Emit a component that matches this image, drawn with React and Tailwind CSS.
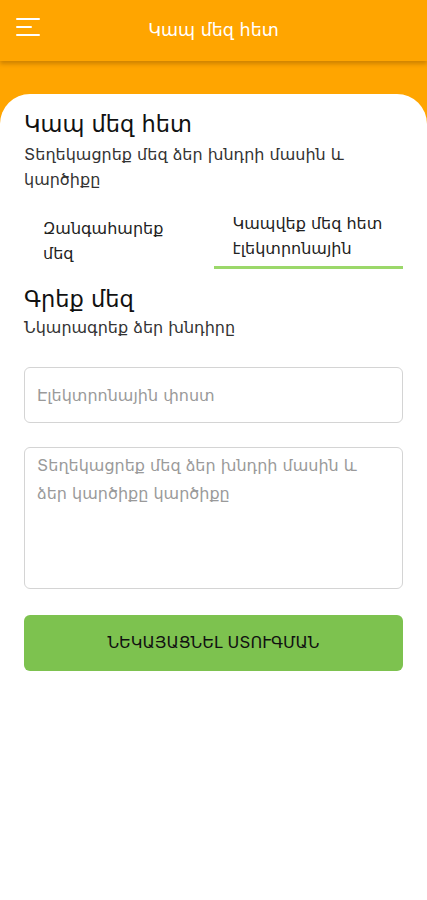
import React from "react";

const font = { fontFamily: '"DejaVu Sans", "Noto Sans", sans-serif' };

export default function App() {
  return (
    <div className="min-h-[900px] w-full bg-white" style={font}>
      {/* top bar */}
      <div className="bg-[#ffa500]">
        <div className="relative flex h-[61px] items-center justify-center shadow-[0_3px_4px_rgba(150,90,0,0.45)]">
          <button className="absolute left-4 top-[18px] flex w-6 flex-col gap-[6px]">
            <span className="block h-[2px] w-6 rounded bg-white" />
            <span className="block h-[2px] w-4 rounded bg-white" />
            <span className="block h-[2px] w-6 rounded bg-white" />
          </button>
          <h1 className="text-[17.5px] text-white">Կապ մեզ հետ</h1>
        </div>
        <div className="h-[34px]" />
      </div>

      {/* card */}
      <div className="-mt-[1px] bg-[#ffa500]">
        <div className="rounded-t-[30px] bg-white px-6 pt-[14px] pb-10">
          <h2 className="text-[22.5px] leading-8 text-[#111]">Կապ մեզ հետ</h2>
          <p className="mt-[2px] text-[16px] leading-[25px] text-[#333]">
            Տեղեկացրեք մեզ ձեր խնդրի մասին և կարծիքը
          </p>

          <div className="mt-[19px] grid grid-cols-2 text-[16px] leading-[25px] text-[#222]">
            <div className="pl-[19px] pr-8 pt-[5px]">Զանգահարեք մեզ</div>
            <div className="border-b-[3px] border-[#9bd86a] pb-[5px] pl-[19px]">
              Կապվեք մեզ հետ էլեկտրոնային
            </div>
          </div>

          <h2 className="mt-[14px] text-[22.5px] leading-8 text-[#111]">Գրեք մեզ</h2>
          <p className="text-[16px] leading-[25px] text-[#333]">Նկարագրեք ձեր խնդիրը</p>

          <input
            className="mt-[27px] block h-[56px] w-full rounded-md border border-[#d4d4d4] px-3 text-[16px] text-[#333] placeholder:text-[#9a9a9a] outline-none"
            placeholder="Էլեկտրոնային փոստ"
          />
          <textarea
            className="mt-6 block h-[142px] w-full resize-none rounded-md border border-[#d4d4d4] px-3 pt-1 text-[16px] leading-7 text-[#333] placeholder:text-[#9a9a9a] outline-none"
            placeholder="Տեղեկացրեք մեզ ձեր խնդրի մասին և ձեր կարծիքը կարծիքը"
          />

          <button className="mt-[26px] flex h-[56px] w-full items-center justify-center rounded-md bg-[#7dc24f] text-[16px] text-[#111]">
            ՆԵԿԱՅԱՑՆԵԼ ՍՏՈՒԳՄԱՆ
          </button>
        </div>
      </div>
    </div>
  );
}
